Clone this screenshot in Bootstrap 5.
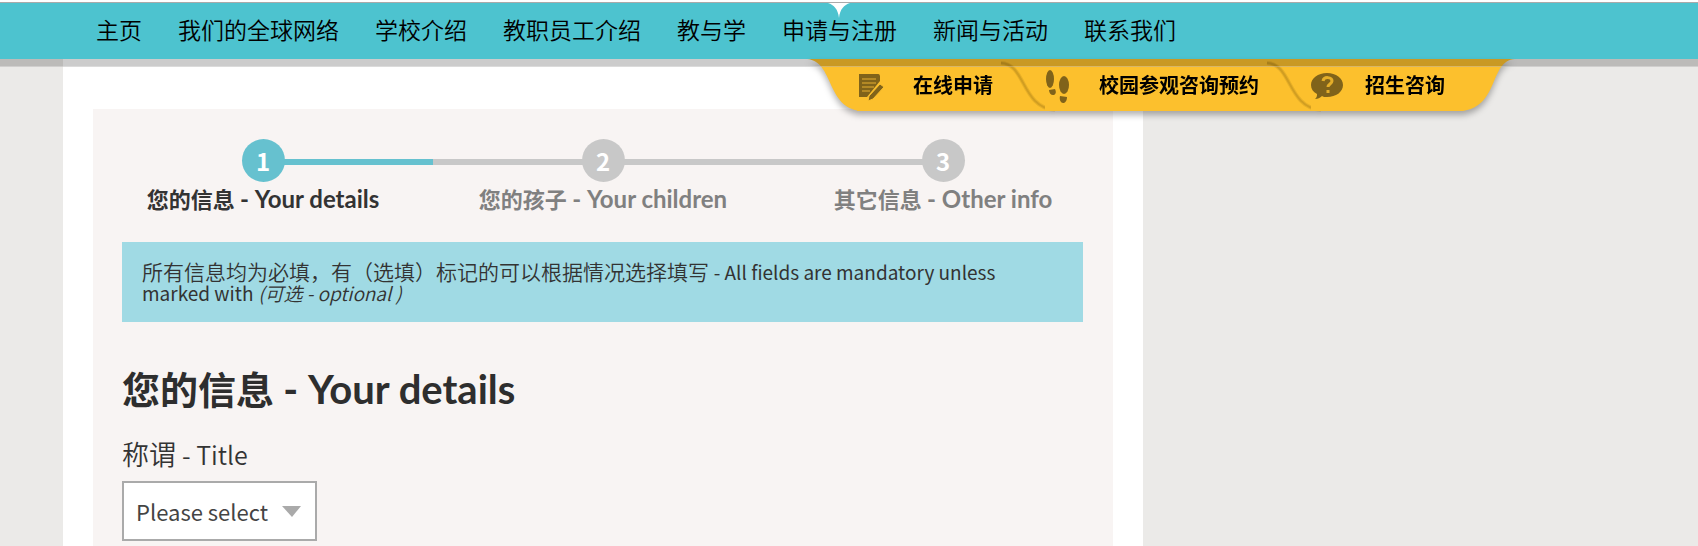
<!DOCTYPE html>
<html lang="zh-CN">
<head>
<meta charset="utf-8">
<meta name="viewport" content="width=device-width, initial-scale=1">
<title>您的信息 - Your details</title>
<link href="https://cdn.jsdelivr.net/npm/bootstrap@5.3.0/dist/css/bootstrap.min.css" rel="stylesheet">
<style>
  body { font-family: "Noto Sans CJK SC", sans-serif; color: #333; background: #ebeae8; }
  .top-strip { background: #fff; }
  .site-header { position: relative; z-index: 2; height: 57px; margin-top: 2px; border-top: 1px solid #aaa; background: #4dc3cf; }
  .site-header::after { content: ""; position: absolute; inset: 100% 0 auto; height: 8px; background: rgba(0,0,0,.2); border-bottom: 1px solid rgba(255,255,255,.3); pointer-events: none; z-index: 3; }
  .main-menu { padding-left: 96px; gap: 36px; font-size: 23px; font-weight: 350; line-height: 52px; }
  .main-menu a { color: #000; }
  .main-menu > li { position: relative; white-space: nowrap; }
  .notch { position: absolute; left: 50%; top: 0; margin-left: -12px; }
  .sub-menu { position: absolute; left: 25px; top: 56px; height: 52px; font-size: 20px; line-height: 52px; font-weight: 700; filter: drop-shadow(0 4px 3px rgba(0,0,0,.3)); }
  .sub-menu a { background: #fcc02d; height: 52px; padding-right: 4px; }
  .sub-menu svg { flex: none; display: block; overflow: visible; }
  .tab-cut { background: #fcc02d; }
  .tab-icon { fill: #80631a; }
  .page { width: 100%; max-width: 1080px; margin-left: 63px; padding: 50px 30px 0; background: #fff; }
  .panel { background: #f8f4f3; padding: 30px 30px 0 29px; }
  .steps { margin: 0 -30px 0 -29px; }
  .step { flex: 1 1 0; position: relative; color: #808080; font-size: 22px; line-height: 36px; font-weight: 700; }
  .step::before, .step::after { content: ""; position: absolute; top: 20px; height: 6px; width: 50%; background: #c8c8c8; }
  .step::before { left: 0; }
  .step::after { left: 50%; }
  .step:first-child::before, .step:last-child::after { display: none; }
  .step.current { color: #333; }
  .step.current::after, .step.current .dot { background: #66c1cf; }
  .dot { position: relative; z-index: 1; width: 43px; height: 43px; border-radius: 50%; background: #c8c8c8; color: #fff; font-size: 24px; }
  .step, .page-title { font-family: Lato, "Noto Sans CJK SC", sans-serif; }
  .dot { font-family: "Noto Sans CJK SC", sans-serif; }
  .step [lang=en] { font-size: 24px; line-height: 24px; }
  .notice { background: #a0dae4; padding: 19px 60px 19px 20px; margin: 24px 0 48px; font-size: 21px; line-height: 21px; font-weight: 350; }
  .notice [lang=en], .notice em { font-size: 19px; line-height: 19px; }
  .notice [lang=en], .title-select { font-weight: 400; }
  .page-title { font-size: 38px; line-height: 38px; font-weight: 700; color: #2e2e2e; margin-bottom: 27px; }
  .page-title [lang=en] { font-size: 40px; line-height: 30px; }
  .field-label { font-size: 27px; line-height: 38px; font-weight: 350; margin-bottom: 8px; }
  .field-label [lang=en] { font-size: 25px; line-height: 25px; }
  .title-select { width: 195px; height: 60px; border: 2px solid #aaa; border-radius: 0; font-size: 22px; line-height: 32px; padding: 12px 40px 12px 12px; color: #444;
    background: #fff url("data:image/svg+xml,%3Csvg xmlns='http://www.w3.org/2000/svg' width='19' height='11'%3E%3Cpath d='M0 0h19L10 11z' fill='%23aaa'/%3E%3C/svg%3E") no-repeat right 14px center / 19px 11px; }
</style>
</head>
<body class="d-flex flex-column min-vh-100">
<div class="top-strip"><header class="site-header">
  <nav aria-label="主导航">
    <ul class="main-menu list-unstyled d-flex mb-0">
      <li><a class="text-decoration-none" href="#">主页</a></li>
      <li><a class="text-decoration-none" href="#">我们的全球网络</a></li>
      <li><a class="text-decoration-none" href="#">学校介绍</a></li>
      <li><a class="text-decoration-none" href="#">教职员工介绍</a></li>
      <li><a class="text-decoration-none" href="#">教与学</a></li>
      <li>
        <svg class="notch" width="22" height="15" viewBox="0 0 22 15" aria-hidden="true"><path d="M0 0h22C16 2 12 6 11 15C10 6 6 2 0 0z" fill="#fff"/></svg>
        <a class="text-decoration-none" href="#">申请与注册</a>
        <div class="sub-menu d-flex">
          <svg width="50" height="52" aria-hidden="true"><path d="M0 0C27 2 19 49 54 52V0z" fill="#fcc02d"/></svg>
          <a class="d-flex align-items-center justify-content-between text-decoration-none" style="width:140px" href="#">
            <svg class="tab-icon" width="32" height="32" viewBox="0 0 32 32" aria-hidden="true"><path d="M2 5h19c2 0 2 2 2 3v4L10 28H2z"/><path d="M5 10h14M5 14h14M5 18h12M5 22h8" stroke="#c4972a" stroke-width="1.500"/><path d="M23 15l4 3-11 12-5 2 1-5z" stroke="#fcc02d" stroke-width="1"/></svg>
            在线申请
          </a>
          <svg class="tab-cut" width="48" height="52" aria-hidden="true"><path d="M4 4C29 5 24 48 58 51" fill="none" stroke="#9c7415" stroke-opacity=".2" stroke-width="4"/><path d="M4 4C29 5 24 48 58 51" fill="none" stroke="#9c7415" stroke-opacity=".3" stroke-width="2"/></svg>
          <a class="d-flex align-items-center justify-content-between text-decoration-none" style="width:218px" href="#">
            <svg class="tab-icon" width="32" height="36" viewBox="0 0 32 36" aria-hidden="true"><ellipse cx="5" cy="12" rx="4" ry="9"/><ellipse cx="19" cy="18" rx="5" ry="9"/><path d="M4 23l6-1c2 4 0 6-2 6s-4-2-4-5zM15 29l7 1c0 4-2 6-4 6s-4-3-3-7z"/></svg>
            校园参观咨询预约
          </a>
          <svg class="tab-cut" width="48" height="52" aria-hidden="true"><path d="M4 4C29 5 24 48 58 51" fill="none" stroke="#9c7415" stroke-opacity=".2" stroke-width="4"/><path d="M4 4C29 5 24 48 58 51" fill="none" stroke="#9c7415" stroke-opacity=".3" stroke-width="2"/></svg>
          <a class="d-flex align-items-center justify-content-between text-decoration-none" style="width:152px;padding-right:18px" href="#">
            <svg class="tab-icon" width="32" height="28" viewBox="0 0 32 28" aria-hidden="true"><path d="M16 2c9 0 16 5 16 12s-7 12-16 12c-2 0-4 0-5-1-2 2-4 3-7 3 2-2 2-3 2-5-4-2-6-5-6-9C0 7 7 2 16 2z"/><path d="M12 10c1-5 9-4 9 0 0 3-4 3-4 6M17 19v3" fill="none" stroke="#fcc02d" stroke-opacity=".8" stroke-width="3"/></svg>
            招生咨询
          </a>
          <svg width="52" height="52" aria-hidden="true"><path d="M0 0H52C26 2 37 46 0 52z" fill="#fcc02d"/></svg>
        </div>
      </li>
      <li><a class="text-decoration-none" href="#">新闻与活动</a></li>
      <li><a class="text-decoration-none" href="#">联系我们</a></li>
    </ul>
  </nav>
</header></div>
<main class="page d-flex flex-column flex-grow-1">
  <form class="panel flex-grow-1">
    <ol class="steps list-unstyled d-flex text-center">
      <li class="step current"><div class="dot d-flex align-items-center justify-content-center mx-auto">1</div>您的信息 <span lang="en">- Your details</span></li>
      <li class="step"><div class="dot d-flex align-items-center justify-content-center mx-auto">2</div>您的孩子 <span lang="en">- Your children</span></li>
      <li class="step"><div class="dot d-flex align-items-center justify-content-center mx-auto">3</div>其它信息 <span lang="en">- Other info</span></li>
    </ol>
    <p class="notice">所有信息均为必填，有（选填）标记的可以根据情况选择填写 <span lang="en">- All fields are mandatory unless marked with</span> <em>(可选 - optional )</em></p>
    <h1 class="page-title">您的信息 <span lang="en">- Your details</span></h1>
    <label class="field-label d-block" for="title">称谓 <span lang="en">- Title</span></label>
    <select class="title-select form-select" id="title"><option>Please select</option><option>Mr</option><option>Mrs</option><option>Ms</option></select>
  </form>
</main>
<script src="https://cdn.jsdelivr.net/npm/bootstrap@5.3.0/dist/js/bootstrap.bundle.min.js"></script>
</body>
</html>
